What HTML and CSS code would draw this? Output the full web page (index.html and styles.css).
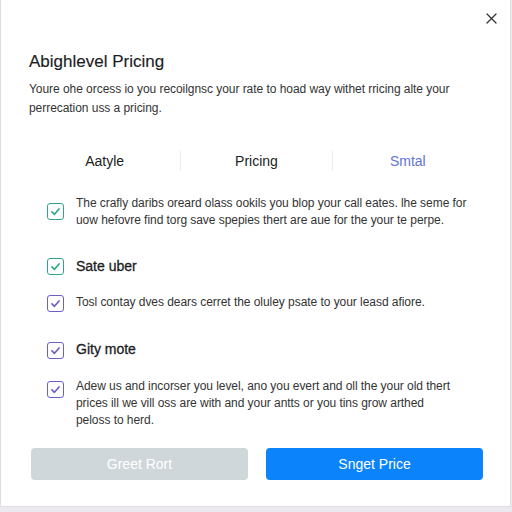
FILE: index.html
```html
<!DOCTYPE html>
<html>
<head>
<meta charset="utf-8">
<link rel="stylesheet" href="styles.css">
</head>
<body>
<div class="modal">
  <div class="close">
    <svg width="11" height="11" viewBox="0 0 11 11"><path d="M1 1L10 10M10 1L1 10" stroke="#333" stroke-width="1.3" stroke-linecap="round"/></svg>
  </div>
  <h1 class="title">Abighlevel Pricing</h1>
  <p class="desc">Youre ohe orcess io you recoilgnsc your rate to hoad way withet rricing alte your<br>perrecation uss a pricing.</p>
  <div class="tabs">
    <div class="tab">Aatyle</div>
    <div class="tab">Pricing</div>
    <div class="tab active">Smtal</div>
  </div>
  <ul class="list">
    <li class="item mid">
      <span class="cb teal"><svg viewBox="0 0 16 16"><path d="M4.2 8.3L6.9 11L11.8 5.3" fill="none" stroke="currentColor" stroke-width="1.8" stroke-linecap="round" stroke-linejoin="round"/></svg></span>
      <span class="text">The crafly daribs oreard olass ookils you blop your call eates. lhe seme for<br>uow hefovre find torg save spepies thert are aue for the your te perpe.</span>
    </li>
    <li class="item head">
      <span class="cb teal"><svg viewBox="0 0 16 16"><path d="M4.2 8.3L6.9 11L11.8 5.3" fill="none" stroke="currentColor" stroke-width="1.8" stroke-linecap="round" stroke-linejoin="round"/></svg></span>
      <span class="text">Sate uber</span>
    </li>
    <li class="item">
      <span class="cb purple"><svg viewBox="0 0 16 16"><path d="M4.2 8.3L6.9 11L11.8 5.3" fill="none" stroke="currentColor" stroke-width="1.8" stroke-linecap="round" stroke-linejoin="round"/></svg></span>
      <span class="text">Tosl contay dves dears cerret the oluley psate to your leasd afiore.</span>
    </li>
    <li class="item head">
      <span class="cb purple"><svg viewBox="0 0 16 16"><path d="M4.2 8.3L6.9 11L11.8 5.3" fill="none" stroke="currentColor" stroke-width="1.8" stroke-linecap="round" stroke-linejoin="round"/></svg></span>
      <span class="text">Gity mote</span>
    </li>
    <li class="item last">
      <span class="cb purple"><svg viewBox="0 0 16 16"><path d="M4.2 8.3L6.9 11L11.8 5.3" fill="none" stroke="currentColor" stroke-width="1.8" stroke-linecap="round" stroke-linejoin="round"/></svg></span>
      <span class="text">Adew us and incorser you level, ano you evert and oll the your old thert<br>prices ill we vill oss are with and your antts or you tins grow arthed<br>peloss to herd.</span>
    </li>
  </ul>
  <div class="actions">
    <button class="btn grey">Greet Rort</button>
    <button class="btn blue">Snget Price</button>
  </div>
</div>
</body>
</html>
```
FILE: styles.css
```css
* { box-sizing: border-box; }
html, body { margin: 0; padding: 0; }
body {
  width: 512px;
  height: 512px;
  background: #ede9f1;
  font-family: "Liberation Sans", Arial, sans-serif;
  color: #222;
  overflow: hidden;
}
.modal {
  position: relative;
  width: 511px;
  height: 507px;
  background: #fff;
  border: 1px solid #dedede;
  border-top: none;
  padding: 0 27px 0 28px;
}
.close {
  position: absolute;
  top: 13px;
  right: 13px;
  width: 11px;
  height: 11px;
  display: flex;
}
.title {
  margin: 0;
  padding-top: 51px;
  font-size: 17px;
  font-weight: 400;
  line-height: 22px;
  color: #1d1d1f;
  -webkit-text-stroke: 0.15px #1d1d1f;
}
.desc {
  margin: 7px 0 0 0;
  font-size: 12px;
  line-height: 19px;
  color: #333;
  letter-spacing: -0.05px;
  white-space: nowrap;
}
.tabs {
  display: grid;
  grid-template-columns: 1fr 1fr 1fr;
  margin: 33px 0 0 0;
}
.tab {
  text-align: center;
  font-size: 14px;
  line-height: 20px;
  color: #222;
  border-left: 1px solid #ececec;
}
.tab:first-child { border-left: none; }
.tab.active { color: #6275d8; }
.list {
  list-style: none;
  margin: 24px 0 0 0;
  padding: 0 0 0 18px;
  display: flex;
  flex-direction: column;
}
.item {
  display: flex;
  gap: 12px;
  align-items: flex-start;
  font-size: 12px;
  line-height: 17px;
  color: #333;
  letter-spacing: -0.05px;
}
.item .text { white-space: nowrap; }
.item.mid { align-items: center; }
.item.head {
  font-size: 14px;
  line-height: 18px;
  color: #1d1d1f;
  letter-spacing: 0;
  -webkit-text-stroke: 0.3px #1d1d1f;
  margin-top: 28px;
  margin-bottom: 19px;
}
.item.head .cb { margin-top: 1px; }
.item.head:nth-child(4) .cb { margin-top: 2px; }
.item .cb { margin-top: 1px; }
.item.mid .cb { margin-top: -2px; }
.item.last .cb { margin-top: 3px; }
.cb {
  flex: none;
  width: 17px;
  height: 17px;
  border: 1.5px solid currentColor;
  border-radius: 3px;
  display: flex;
  -webkit-text-stroke: 0;
}
.cb svg { width: 100%; height: 100%; }
.cb.teal { color: #2fa58e; }
.cb.purple { color: #6a60c8; }
.actions {
  display: flex;
  gap: 18px;
  margin-top: 19px;
  padding-left: 2px;
}
.btn {
  flex: 1;
  height: 32px;
  border: none;
  border-radius: 4px;
  font-family: "Liberation Sans", Arial, sans-serif;
  font-size: 14px;
  color: #fff;
}
.btn.grey { background: #cfd7db; }
.btn.blue { background: #0b84fb; }
```
